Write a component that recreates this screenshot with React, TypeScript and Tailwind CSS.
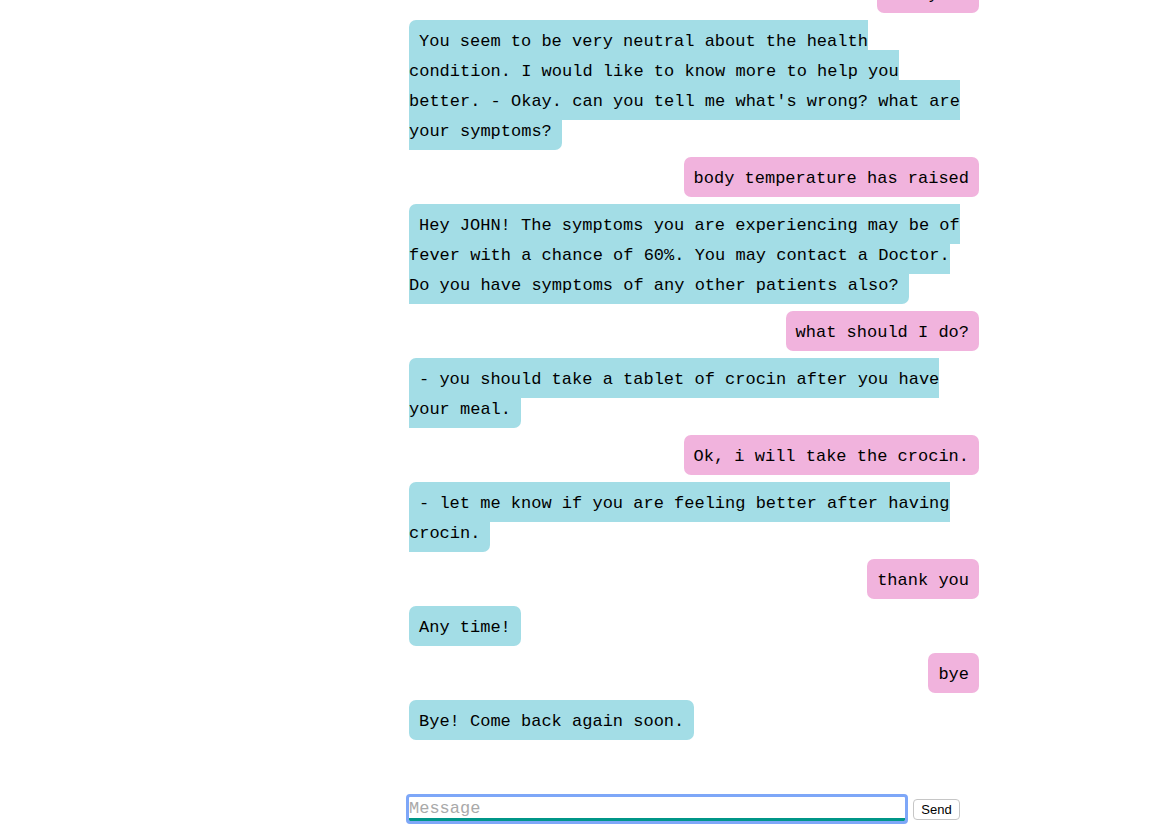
import React from "react";

type Msg = { from: "user" | "bot"; text: string };

const messages: Msg[] = [
  { from: "bot", text: "Hi! How are you feeling today?" },
  { from: "user", text: "not yet." },
  {
    from: "bot",
    text: "You seem to be very neutral about the health condition. I would like to know more to help you better. - Okay. can you tell me what's wrong? what are your symptoms?",
  },
  { from: "user", text: "body temperature has raised" },
  {
    from: "bot",
    text: "Hey JOHN! The symptoms you are experiencing may be of fever with a chance of 60%. You may contact a Doctor. Do you have symptoms of any other patients also?",
  },
  { from: "user", text: "what should I do?" },
  { from: "bot", text: "- you should take a tablet of crocin after you have your meal." },
  { from: "user", text: "Ok, i will take the crocin." },
  { from: "bot", text: "- let me know if you are feeling better after having crocin." },
  { from: "user", text: "thank you" },
  { from: "bot", text: "Any time!" },
  { from: "user", text: "bye" },
  { from: "bot", text: "Bye! Come back again soon." },
];

const ChatPage = () => {
  return (
    <div className="h-[832px] w-full overflow-hidden bg-white flex flex-col justify-end font-['Liberation_Mono','Courier_New',monospace] text-[17px] text-black">
      <div className="ml-[409px] w-[570px] flex flex-col gap-[17px]">
        {messages.map((m, i) =>
          m.from === "user" ? (
            <div key={i} className="text-right leading-[30px]">
              <span className="bg-[#f1b3dd] px-[10px] pt-[12px] pb-[9px] rounded-[7px]">{m.text}</span>
            </div>
          ) : (
            <div key={i} className="text-left leading-[30px] pr-[10px]">
              <span className="bg-[#a3dde6] px-[10px] pt-[12px] pb-[9px] rounded-[7px] [box-decoration-break:slice]">
                {m.text}
              </span>
            </div>
          )
        )}
      </div>
      <div className="ml-[409px] mt-[60px] mb-[11px] flex items-center">
        <input
          type="text"
          placeholder="Message"
          className="w-[496px] h-[24px] p-0 pt-[3px] border-0 border-b-[3px] border-[#009688] rounded-[1px] outline-[3px] outline-solid outline-[#7ea7f8] bg-white text-[17px] font-['Liberation_Mono','Courier_New',monospace] placeholder:text-[#a9a9a9]"
        />
        <button className="ml-[8px] w-[47px] h-[21px] bg-white border border-[#c6c6c6] rounded-[4px] text-[13px] text-black font-['Liberation_Sans',Arial,sans-serif] leading-none">
          Send
        </button>
      </div>
    </div>
  );
};

export default ChatPage;
